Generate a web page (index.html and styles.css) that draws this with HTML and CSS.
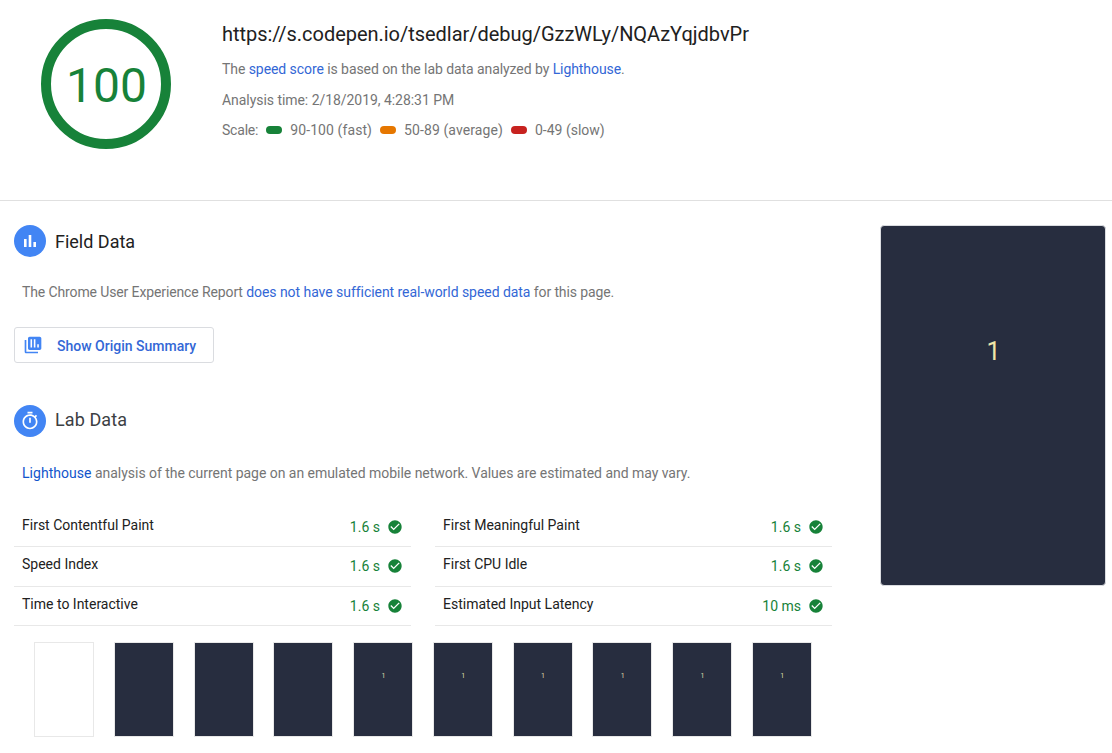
FILE: index.html
```html
<!DOCTYPE html>
<html lang="en">
<head>
<meta charset="utf-8">
<title>PageSpeed Insights</title>
<link rel="stylesheet" href="styles.css">
</head>
<body>
<svg class="defs" aria-hidden="true">
  <symbol id="check" viewBox="0 0 24 24"><path d="M12 2C6.48 2 2 6.48 2 12s4.48 10 10 10 10-4.480 10-10S17.520 2 12 2zm-2 15l-5-5 1.410-1.410L10 14.170l7.590-7.590L19 8l-9 9z"/></symbol>
</svg>
<header class="summary">
  <div class="gauge"><span class="gauge-score">100</span></div>
  <div class="details">
    <h1 class="url">https://s.codepen.io/tsedlar/debug/GzzWLy/NQAzYqjdbvPr</h1>
    <p class="line intro">The <a class="link">speed score</a> is based on the lab data analyzed by <a class="link">Lighthouse</a>.</p>
    <p class="line time">Analysis time: 2/18/2019, 4:28:31 PM</p>
    <p class="line scale"><span class="scale-label">Scale:</span><i class="pill fast"></i><span class="range">90-100 (fast)</span><i class="pill average"></i><span class="range">50-89 (average)</span><i class="pill slow"></i><span>0-49 (slow)</span></p>
  </div>
</header>
<main class="content">
  <div class="report">
    <section class="field">
      <div class="heading">
        <span class="badge"><svg class="bars" viewBox="0 0 12 12"><path d="M0 4h2.600v8H0zM4.700 0h2.600v12H4.700zM9.400 7H12v5H9.400z"/></svg></span>
        <h2 class="title">Field Data</h2>
      </div>
      <p class="note field-note">The Chrome User Experience Report <a class="link">does not have sufficient real-world speed data</a> for this page.</p>
      <button class="origin">
        <svg class="origin-icon" viewBox="0 0 24 24"><path d="M4 6H2v14c0 1.100.9 2 2 2h14v-2H4V6zM20 2H8c-1.100 0-2 .9-2 2v12c0 1.100.9 2 2 2h12c1.100 0 2-.9 2-2V4c0-1.100-.9-2-2-2zM10.900 15H9V5h1.900zM14.900 15H13V5h1.900zM19 15h-1.900v-4H19z"/></svg>
        <span>Show Origin Summary</span>
      </button>
    </section>
    <section class="lab">
      <div class="heading">
        <span class="badge"><svg class="timer" viewBox="0 0 24 24"><path d="M15 1H9v2h6V1zm-4 13h2V8h-2v6zm8.030-6.610l1.420-1.420c-.43-.51-.9-.99-1.410-1.410l-1.420 1.420C16.070 4.740 14.120 4 12 4c-4.970 0-9 4.030-9 9s4.020 9 9 9 9-4.030 9-9c0-2.120-.74-4.070-1.970-5.610zM12 20c-3.870 0-7-3.130-7-7s3.130-7 7-7 7 3.130 7 7-3.130 7-7 7z"/></svg></span>
        <h2 class="title lab-title">Lab Data</h2>
      </div>
      <p class="note lab-note"><a class="link deep">Lighthouse</a> analysis of the current page on an emulated mobile network. Values are estimated and may vary.</p>
      <div class="metrics">
        <div class="metric"><span>First Contentful Paint</span><span class="value">1.6 s<svg class="check"><use href="#check"/></svg></span></div>
        <div class="metric"><span>First Meaningful Paint</span><span class="value">1.6 s<svg class="check"><use href="#check"/></svg></span></div>
        <div class="metric"><span>Speed Index</span><span class="value">1.6 s<svg class="check"><use href="#check"/></svg></span></div>
        <div class="metric"><span>First CPU Idle</span><span class="value">1.6 s<svg class="check"><use href="#check"/></svg></span></div>
        <div class="metric"><span>Time to Interactive</span><span class="value">1.6 s<svg class="check"><use href="#check"/></svg></span></div>
        <div class="metric"><span>Estimated Input Latency</span><span class="value">10 ms<svg class="check"><use href="#check"/></svg></span></div>
      </div>
      <div class="filmstrip">
        <div class="frame blank"></div>
        <div class="frame"></div>
        <div class="frame"></div>
        <div class="frame"></div>
        <div class="frame">1</div>
        <div class="frame">1</div>
        <div class="frame">1</div>
        <div class="frame">1</div>
        <div class="frame">1</div>
        <div class="frame">1</div>
      </div>
    </section>
  </div>
  <aside class="preview">1</aside>
</main>
</body>
</html>
```
FILE: styles.css
```css
* { box-sizing: border-box; }
body {
  margin: 0;
  background: #fff;
  color: #757575;
  font: 14px/20px Roboto, sans-serif;
  overflow: hidden;
}
h1, h2, p { margin: 0; font-weight: 400; }
.defs { display: none; }
.link { color: #3367d6; }
.deep { color: #1155cc; }

.summary {
  display: flex;
  height: 201px;
  padding: 19px 0 0 41px;
  border-bottom: 1px solid #e0e0e0;
}
.gauge {
  display: flex;
  align-items: center;
  justify-content: center;
  width: 130px;
  height: 130px;
  border: 10px solid #178239;
  border-radius: 50%;
}
.gauge-score { color: #178239; font-size: 48px; line-height: 56px; padding: 4px 0 0 1px; }
.details { margin-left: 51px; }
.url { color: #212121; font-size: 20px; line-height: 30px; margin-bottom: 10px; letter-spacing: -0.03px; }
.line { margin-bottom: 11px; }
.line + .line + .line { margin-bottom: 0; margin-top: -1px; }
.intro { letter-spacing: -0.07px; }
.time { letter-spacing: -0.05px; }
.scale { display: flex; align-items: center; gap: 8px; }
.scale-label { letter-spacing: -0.2px; }
.range { letter-spacing: 0.09px; }
.pill { width: 16px; height: 8px; border-radius: 4px; }
.fast { background: #178239; }
.average { background: #e67700; }
.slow { background: #c7221f; }

.content { display: flex; align-items: flex-start; padding: 24px 0 0 14px; }
.report { width: 818px; }
.heading { display: flex; align-items: center; height: 32px; }
.badge {
  display: flex;
  align-items: center;
  justify-content: center;
  width: 32px;
  height: 32px;
  border-radius: 50%;
  background: #4285f4;
}
.badge svg { fill: #fff; }
.bars { width: 12px; height: 12px; }
.timer { width: 20px; height: 20px; }
.title { margin-left: 9px; color: #212121; font-size: 18px; line-height: 30px; padding-top: 1px; }
.lab-title { color: #3c4043; padding: 0 0 2px; letter-spacing: 0.1px; }
.note { padding-left: 8px; margin-top: 25px; }
.field-note { letter-spacing: -0.12px; }
.field-note .link { letter-spacing: -0.05px; }
.lab-note { letter-spacing: -0.033px; }
.lab-note .link { letter-spacing: 0.04px; }
.origin {
  display: flex;
  align-items: center;
  width: 200px;
  height: 36px;
  margin-top: 25px;
  padding: 1px 0 0 8px;
  border: 1px solid #dadce0;
  border-radius: 3px;
  background: #fff;
  color: #3367d6;
  font: 500 14px/20px Roboto, sans-serif;
}
.origin-icon { width: 20px; height: 20px; margin: -2px 14px 0 0; fill: #4285f4; fill-rule: evenodd; }
.lab { margin-top: 42px; }
.lab .note { margin-top: 26px; }
.metrics {
  display: grid;
  grid-template-columns: 397px 397px;
  column-gap: 24px;
  margin-top: 24.4px;
}
.metric {
  display: flex;
  justify-content: space-between;
  height: 39.5px;
  padding: 7.5px 8px 0;
  border-bottom: 1px solid #e8e8e8;
  color: #212121;
}
.metric:nth-child(3), .metric:nth-child(4) { height: 40px; margin-bottom: -0.5px; }
.value { display: flex; align-items: center; height: 24px; color: #178239; }
.check { width: 16px; height: 16px; margin-left: 7px; fill: #178239; }
.filmstrip { display: flex; gap: 19.75px; padding: 16px 0 0 20px; }
.frame {
  flex: none;
  width: 60px;
  height: 95px;
  padding: 27px 0 0 1px;
  border: 1px solid #e8e8e8;
  background: #272d3f;
  color: #dfdcab;
  font: 7px/12px Roboto, sans-serif;
  text-align: center;
}
.blank { background: #fff; }
.preview {
  width: 226px;
  height: 361px;
  margin-left: 48px;
  padding: 111px 0 0 1px;
  border: 1px solid #dadce0;
  border-radius: 4px;
  background: #272d3f;
  color: #f0e6a8;
  font: 25px/30px Roboto, sans-serif;
  text-align: center;
}
```
